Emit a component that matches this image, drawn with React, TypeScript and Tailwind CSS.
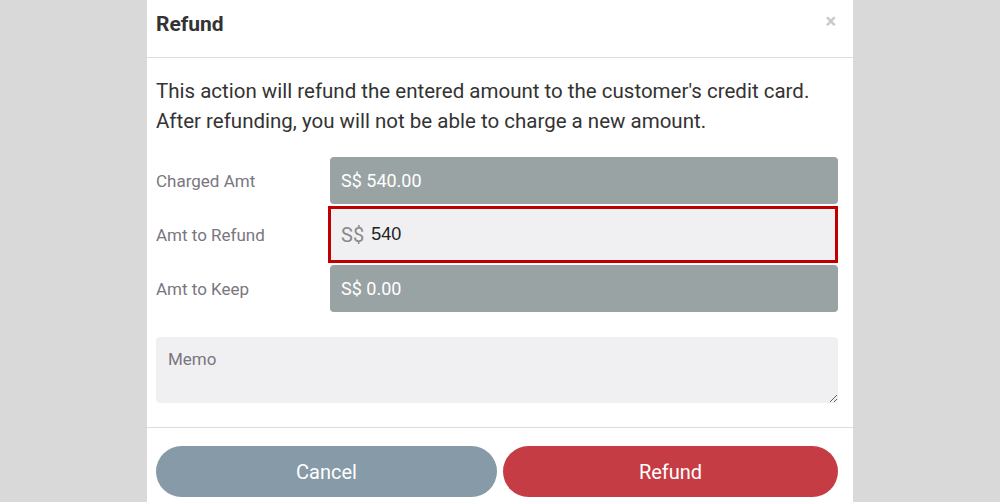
import React from "react";

const font = { fontFamily: '"Liberation Sans Narrow", "Roboto", sans-serif' };

export default function App() {
  return (
    <div className="w-[1000px] h-[502px] overflow-hidden bg-[#d9d9d9] flex justify-center">
      <div
        className="w-[706px] h-[502px] bg-white flex flex-col text-[#333]"
        style={font}
      >
        <div className="h-[58px] border-b border-[#dcdcdc] flex items-center justify-between pl-[9px] pr-[17px] shrink-0">
          <h1 className="text-[21px] font-bold text-[#333] leading-none mt-[-9px]">Refund</h1>
          <span className="text-[#c8c8c8] text-[20px] font-bold leading-none mt-[-16px]">×</span>
        </div>
        <div className="pl-[9px] pr-[15px] pt-[18px] flex flex-col">
          <p className="text-[20.5px] leading-[30px] text-[#333]">
            This action will refund the entered amount to the customer's credit card.
            <br />
            After refunding, you will not be able to charge a new amount.
          </p>
          <div className="mt-[21px] flex flex-col">
            <div className="flex items-center h-[47px]">
              <div className="w-[174px] text-[17px] text-[#7a7680] pt-[2px]">Charged Amt</div>
              <div className="flex-1 h-[47px] rounded-[4px] bg-[#9aa3a3] text-white text-[18px] flex items-center pl-[11px]">
                S$ 540.00
              </div>
            </div>
            <div className="flex items-center h-[61px]">
              <div className="w-[172px] text-[17px] text-[#7a7680] pt-[2px]">Amt to Refund</div>
              <div className="flex-1 h-[57px] border-[3px] border-[#c00000] bg-[#f0f0f2] flex items-center pl-[10px]">
                <span className="text-[20px] text-[#8a8a8a]">S$</span>
                <span
                  className="ml-[7px] text-[18px] text-[#222]"
                  style={{ fontFamily: '"Liberation Sans", Arial, sans-serif' }}
                >
                  540
                </span>
              </div>
            </div>
            <div className="flex items-center h-[47px]">
              <div className="w-[174px] text-[17px] text-[#7a7680] pt-[2px]">Amt to Keep</div>
              <div className="flex-1 h-[47px] rounded-[4px] bg-[#9aa3a3] text-white text-[18px] flex items-center pl-[11px]">
                S$ 0.00
              </div>
            </div>
          </div>
          <textarea
            placeholder="Memo"
            className="mt-[25px] h-[66px] w-full rounded-[4px] bg-[#f0f0f2] px-[12px] py-[10px] text-[17px] placeholder:text-[#7a7680] outline-none resize-y"
            style={font}
          />
        </div>
        <div className="mt-[24px] border-t border-[#dcdcdc] pl-[9px] pr-[15px] pt-[18px] flex gap-[6px]">
          <button className="w-[341px] h-[51px] rounded-full bg-[#879aa8] text-white text-[20px]">
            Cancel
          </button>
          <button className="flex-1 h-[51px] rounded-full bg-[#c53c45] text-white text-[20px]">
            Refund
          </button>
        </div>
      </div>
    </div>
  );
}
